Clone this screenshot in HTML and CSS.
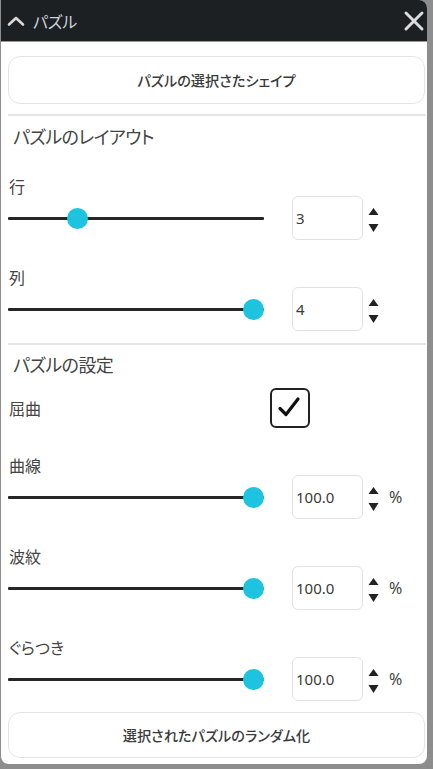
FILE: index.html
```html
<!DOCTYPE html>
<html lang="ja">
<head>
<meta charset="utf-8">
<title>パズル</title>
<link rel="stylesheet" href="styles.css">
</head>
<body>
<div class="panel">
  <header class="panel-head">
    <svg class="chev" width="18" height="12" viewBox="0 0 18 12"><polyline points="2,9.5 9,3 16,9.5" fill="none" stroke="#d9d9d9" stroke-width="2.6" stroke-linecap="round" stroke-linejoin="round"/></svg>
    <span class="head-title">パズル</span>
    <svg class="close" width="22" height="22" viewBox="0 0 22 22"><path d="M3 3 L19 19 M19 3 L3 19" stroke="#dcdcdc" stroke-width="3" stroke-linecap="round"/></svg>
  </header>
  <div class="panel-body">
    <button class="btn btn-top">パズルの選択さたシェイプ</button>
    <div class="sep sep-1"></div>
    <h2 class="sec-title sec-title-1">パズルのレイアウト</h2>

    <div class="group group-first">
      <div class="label">行</div>
      <div class="row">
        <input class="slider" type="range" min="2" max="6" value="3">
        <div class="numbox">3</div>
        <svg class="spin" width="11" height="26" viewBox="0 0 11 26"><polygon points="5.5,2 10.5,9 0.5,9" fill="#222"/><polygon points="0.5,18 10.5,18 5.5,26" fill="#222"/></svg>
      </div>
    </div>
    <div class="group">
      <div class="label">列</div>
      <div class="row">
        <input class="slider" type="range" min="1" max="4" value="4">
        <div class="numbox">4</div>
        <svg class="spin" width="11" height="26" viewBox="0 0 11 26"><polygon points="5.5,2 10.5,9 0.5,9" fill="#222"/><polygon points="0.5,18 10.5,18 5.5,26" fill="#222"/></svg>
      </div>
    </div>

    <div class="sep sep-2"></div>
    <h2 class="sec-title sec-title-2">パズルの設定</h2>

    <div class="check-row">
      <div class="label">屈曲</div>
      <div class="checkbox">
        <svg width="36" height="36" viewBox="0 0 36 36"><polyline points="8,18.5 14,24.5 26,9" fill="none" stroke="#111" stroke-width="3.2" stroke-linecap="round" stroke-linejoin="round"/></svg>
      </div>
    </div>

    <div class="group">
      <div class="label">曲線</div>
      <div class="row">
        <input class="slider" type="range" min="0" max="100" value="100">
        <div class="numbox">100.0</div>
        <svg class="spin" width="11" height="26" viewBox="0 0 11 26"><polygon points="5.5,2 10.5,9 0.5,9" fill="#222"/><polygon points="0.5,18 10.5,18 5.5,26" fill="#222"/></svg>
        <span class="pct">%</span>
      </div>
    </div>
    <div class="group">
      <div class="label">波紋</div>
      <div class="row">
        <input class="slider" type="range" min="0" max="100" value="100">
        <div class="numbox">100.0</div>
        <svg class="spin" width="11" height="26" viewBox="0 0 11 26"><polygon points="5.5,2 10.5,9 0.5,9" fill="#222"/><polygon points="0.5,18 10.5,18 5.5,26" fill="#222"/></svg>
        <span class="pct">%</span>
      </div>
    </div>
    <div class="group">
      <div class="label">ぐらつき</div>
      <div class="row">
        <input class="slider" type="range" min="0" max="100" value="100">
        <div class="numbox">100.0</div>
        <svg class="spin" width="11" height="26" viewBox="0 0 11 26"><polygon points="5.5,2 10.5,9 0.5,9" fill="#222"/><polygon points="0.5,18 10.5,18 5.5,26" fill="#222"/></svg>
        <span class="pct">%</span>
      </div>
    </div>

    <button class="btn btn-bottom">選択されたパズルのランダム化</button>
  </div>
</div>
</body>
</html>
```

FILE: styles.css
```css
* { box-sizing: border-box; }

html, body {
  margin: 0;
  padding: 0;
  background: #8d8d8d;
}

body {
  font-family: "Noto Sans CJK JP", "Noto Sans", sans-serif;
  font-feature-settings: "palt";
  color: #3a3a3a;
}

.panel {
  width: 427px;
  height: 764px;
  background: #ffffff;
  border-left: 1px solid #8d8d8d;
  border-radius: 0 8px 8px 8px;
  overflow: hidden;
  display: flex;
  flex-direction: column;
}

.panel-head {
  height: 42px;
  flex: none;
  background: #1d2022;
  display: flex;
  align-items: center;
  padding: 0 0 0 6px;
  border-bottom: 1px solid #9a9a9a;
}

.chev { margin-top: 1px; }

.head-title {
  margin-left: 8px;
  font-size: 16px;
  color: #ccd5db;
  letter-spacing: -0.3px;
}

.close {
  margin-left: auto;
  margin-right: 2px;
}

.panel-body {
  padding: 0 2px 0 7px;
  display: flex;
  flex-direction: column;
}

.btn {
  display: block;
  width: 100%;
  background: #fff;
  border: 1.5px solid #e4e4e4;
  border-radius: 12px;
  font-family: inherit;
  font-feature-settings: "palt";
  font-size: 14.2px;
  font-weight: 500;
  color: #3a3a3a;
  padding: 0;
}

.btn-top {
  margin-top: 14px;
  height: 48px;
}

.btn-bottom {
  margin-top: 11px;
  height: 46px;
}

.sep {
  height: 2px;
  background: #e6e6e6;
  margin-right: -1px;
}

.sep-1 { margin-top: 10px; }
.sep-2 { margin-top: 12px; }

.sec-title {
  margin: 0;
  font-size: 18px;
  font-weight: 400;
  line-height: 26px;
  color: #444;
  padding-left: 5px;
  letter-spacing: -0.6px;
}

.sec-title-1 { margin-top: 7px; }
.sec-title-2 { margin-top: 6px; }

.label {
  font-size: 16px;
  line-height: 20px;
  color: #444;
  padding-left: 1px;
}

.group { margin-top: 27px; }
.group-first { margin-top: 27px; }

.row {
  height: 44px;
  display: flex;
  align-items: center;
}

.slider {
  -webkit-appearance: none;
  appearance: none;
  width: 256px;
  height: 22px;
  margin: 0;
  background: transparent;
}

.slider::-webkit-slider-runnable-track {
  height: 3px;
  background: #262626;
  border-radius: 1px;
}

.slider::-webkit-slider-thumb {
  -webkit-appearance: none;
  appearance: none;
  width: 21px;
  height: 21px;
  border-radius: 50%;
  background: #1ec3e0;
  margin-top: -9px;
  border: none;
}

.numbox {
  width: 71px;
  height: 44px;
  margin-left: 28px;
  border: 1.5px solid #e2e2e2;
  border-radius: 6px;
  font-family: "Noto Sans", sans-serif;
  font-size: 15px;
  color: #3a3a3a;
  padding: 12px 0 0 3px;
  line-height: 18px;
}

.spin {
  margin-left: 5px;
  margin-top: 2px;
}

.pct {
  margin-left: 10px;
  font-family: "Noto Sans", sans-serif;
  font-size: 16px;
  color: #444;
}

.check-row {
  margin-top: 11px;
  height: 40px;
  display: grid;
  grid-template-columns: 262px 40px;
  align-items: center;
}

.checkbox {
  width: 40px;
  height: 40px;
  border: 2.5px solid #222;
  border-radius: 6px;
  display: flex;
  align-items: center;
  justify-content: center;
}
```
